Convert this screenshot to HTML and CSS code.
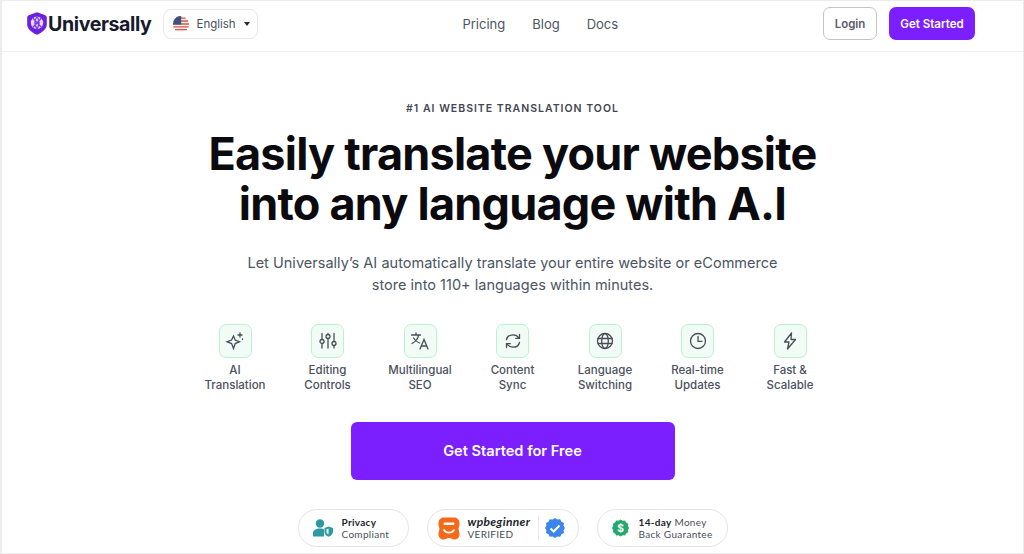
FILE: index.html
```html
<!DOCTYPE html>
<html lang="en">
<head>
    <meta charset="UTF-8">
    <meta name="viewport" content="width=device-width, initial-scale=1.0">
    <title>Universally - AI Website Translation</title>
    <link rel="stylesheet" href="styles.css">
</head>
<body>
    <div class="page">
        <header class="topbar">
            <div class="topbar-left">
                <a class="brand" href="#">
                    <svg class="brand-mark" width="20" height="23" viewBox="0 0 20 23">
                        <path d="M10 0.3 L17.8 3 C19 3.4 19.8 4.4 19.8 5.6 V12.5 C19.8 17 15 20.8 10 22.7 C5 20.8 0.2 17 0.2 12.5 V5.6 C0.2 4.4 1 3.4 2.2 3 Z" fill="#6a22dc"/>
                        <circle cx="10" cy="10.8" r="6.2" fill="#e6d6ff"/>
                        <path d="M5.8 6 L14.5 15.5 M14.5 6 L5.8 15.5 M10 4.5 C7.5 8 7.5 13 10 17 M10 4.5 C12.5 8 12.5 13 10 17" fill="none" stroke="#7a35e6" stroke-width="1.2"/>
                    </svg>
                    <span>Universally</span>
                </a>
                <button class="lang">
                    <svg class="flag" width="16" height="16" viewBox="0 0 16 16">
                        <circle cx="8" cy="8" r="8" fill="#f5efec"/>
                        <path d="M3.5 1.4 H12.5 V2.8 H3.5 Z M1 4.3 H15 V5.8 H1 Z M0 7.2 H16 V8.7 H0 Z M0.3 10.2 H15.7 V11.6 H0.3 Z M2 13 H14 V14.3 H2 Z" fill="#cf5b50"/>
                        <path d="M8 0 A8 8 0 0 0 0.5 5.3 L0 8.6 H8.2 V0 Z" fill="#3f4f80"/>
                    </svg>
                    <span>English</span>
                    <i class="caret"></i>
                </button>
            </div>
            <nav class="nav">
                <a href="#">Pricing</a>
                <a href="#">Blog</a>
                <a href="#">Docs</a>
            </nav>
            <div class="topbar-right">
                <a class="btn-login" href="#">Login</a>
                <a class="btn-start" href="#">Get Started</a>
            </div>
        </header>

        <main class="hero">
            <p class="eyebrow">#1 AI WEBSITE TRANSLATION TOOL</p>
            <h1>Easily translate your website<br>into any language with A.I</h1>
            <p class="lead">Let Universally’s AI automatically translate your entire website or eCommerce<br>store into 110+ languages within minutes.</p>

            <ul class="features">
                <li>
                    <span class="icon-box">
                        <svg width="20" height="20" viewBox="0 0 20 20" class="ico"><path d="M8.5 5 L10.2 9 L14.5 10.8 L10.2 12.6 L8.5 17.5 L6.6 12.6 L2 10.8 L6.6 9 Z"/><path d="M15 2 V6 M13 4 H17 M17.5 8 V8.6"/></svg>
                    </span>
                    AI<br>Translation
                </li>
                <li>
                    <span class="icon-box">
                        <svg width="20" height="20" viewBox="0 0 20 20" class="ico"><path d="M4 2.5 V8.5 M4 12.5 V17 M10 2.5 V3.5 M10 7.5 V17 M16 2.5 V10.5 M16 14.5 V17"/><circle cx="4" cy="10.5" r="2"/><circle cx="10" cy="5.5" r="2"/><circle cx="16" cy="12.5" r="2"/></svg>
                    </span>
                    Editing<br>Controls
                </li>
                <li>
                    <span class="icon-box">
                        <svg width="20" height="20" viewBox="0 0 20 20" class="ico"><path d="M1.5 4 H10.5 M6 2 V4 M8.5 4 C8 8 5 11 2 12.5 M3.5 7 C5 9.5 7 11 9.5 12"/><path d="M10 18 L14 8.5 L18 18 M11.3 15 H16.7"/></svg>
                    </span>
                    Multilingual<br>SEO
                </li>
                <li>
                    <span class="icon-box">
                        <svg width="20" height="20" viewBox="0 0 20 20" class="ico"><path d="M3.5 8.5 C4.2 5.5 7 3.8 10 3.8 C12.6 3.8 14.6 5 16 7 M16.5 3.5 V7.3 H12.7"/><path d="M16.5 11.5 C15.8 14.5 13 16.2 10 16.2 C7.4 16.2 5.4 15 4 13 M3.5 16.5 V12.7 H7.3"/></svg>
                    </span>
                    Content<br>Sync
                </li>
                <li>
                    <span class="icon-box">
                        <svg width="20" height="20" viewBox="0 0 20 20" class="ico"><circle cx="10" cy="10" r="7.5"/><ellipse cx="10" cy="10" rx="3.3" ry="7.5"/><path d="M3 7.5 H17 M3 12.5 H17"/></svg>
                    </span>
                    Language<br>Switching
                </li>
                <li>
                    <span class="icon-box">
                        <svg width="20" height="20" viewBox="0 0 20 20" class="ico"><circle cx="10" cy="10" r="7.5"/><path d="M10 5.5 V10.3 H14"/></svg>
                    </span>
                    Real-time<br>Updates
                </li>
                <li>
                    <span class="icon-box">
                        <svg width="20" height="20" viewBox="0 0 20 20" class="ico"><path d="M11.5 2 L4.5 11 H9 L7.5 18 L15.5 8.5 H11 Z" stroke-linejoin="round"/></svg>
                    </span>
                    Fast &amp;<br>Scalable
                </li>
            </ul>

            <a class="cta" href="#">Get Started for Free</a>

            <div class="badges">
                <div class="badge badge-privacy">
                    <svg width="20" height="18" viewBox="0 0 20 18">
                        <circle cx="7" cy="4.5" r="4.2" fill="#2b9aa3"/>
                        <path d="M0 17.5 V14 C0 11 3 9.5 7 9.5 C8.8 9.5 10.2 9.8 11 10.4 V17.5 Z" fill="#2b9aa3"/>
                        <path d="M15.5 7.5 L20 9 V12.5 C20 15 18 16.8 15.5 17.8 C13 16.8 11.5 15 11.5 12.5 V9 Z" fill="#2b9aa3"/>
                        <path d="M15.5 9.5 V15.5 C14.3 14.8 13.5 13.8 13.5 12.5 V10.2 Z" fill="#fff"/>
                    </svg>
                    <span class="badge-text"><b>Privacy</b><br>Compliant</span>
                </div>
                <div class="badge badge-wpb">
                    <svg width="22" height="23" viewBox="0 0 22 23">
                        <path d="M6 0.5 H16 C19.5 0.5 21.5 3 21.5 6.5 C21.5 9 20.8 10.5 20.5 12 C21 14 21.5 15.5 21.5 17.5 C21.5 20.5 19 22.5 16.5 22.5 C14.5 22.5 13 21 11 21 C9 21 7.5 22.5 5.5 22.5 C3 22.5 0.5 20.5 0.5 17.5 C0.5 15.5 1 14 1.5 12 C1.2 10.5 0.5 9 0.5 6.5 C0.5 3 2.5 0.5 6 0.5 Z" fill="#f4691a"/>
                        <rect x="5.5" y="5.5" width="11" height="2.4" rx="1.2" fill="#fff"/>
                        <path d="M6 13 C8 16.5 14 16.5 16 13" fill="none" stroke="#fff" stroke-width="1.7" stroke-linecap="round"/>
                    </svg>
                    <span class="badge-text"><b class="wp-name">wpbeginner</b><br>VERIFIED</span>
                    <span class="badge-sep"></span>
                    <svg class="seal" width="20" height="20" viewBox="0 0 20 20">
                        <path d="M10 0 L12.4 1.6 L15.2 1.2 L16.4 3.7 L19 4.9 L18.6 7.7 L20 10 L18.6 12.3 L19 15.1 L16.4 16.3 L15.2 18.8 L12.4 18.4 L10 20 L7.6 18.4 L4.8 18.8 L3.6 16.3 L1 15.1 L1.4 12.3 L0 10 L1.4 7.7 L1 4.9 L3.6 3.7 L4.8 1.2 L7.6 1.6 Z" fill="#3b86ee"/>
                        <path d="M5.5 10.5 L8.7 13.5 L14.5 7.5" fill="none" stroke="#fff" stroke-width="2"/>
                    </svg>
                </div>
                <div class="badge badge-money">
                    <svg width="20" height="20" viewBox="0 0 20 20">
                        <path d="M10 0 L12.4 1.6 L15.2 1.2 L16.4 3.7 L19 4.9 L18.6 7.7 L20 10 L18.6 12.3 L19 15.1 L16.4 16.3 L15.2 18.8 L12.4 18.4 L10 20 L7.6 18.4 L4.8 18.8 L3.6 16.3 L1 15.1 L1.4 12.3 L0 10 L1.4 7.7 L1 4.9 L3.6 3.7 L4.8 1.2 L7.6 1.6 Z" fill="#25a86b"/>
                        <text x="10" y="14.2" text-anchor="middle" class="dollar">$</text>
                    </svg>
                    <span class="badge-text"><b>14-day</b> Money<br>Back Guarantee</span>
                </div>
            </div>
        </main>
    </div>
</body>
</html>
```

FILE: styles.css
```css
* {
    box-sizing: border-box;
}
html, body {
    margin: 0;
    height: 100%;
}
body {
    background: #fff;
    color: #111;
    font-family: Inter, "Liberation Sans", sans-serif;
    overflow: hidden;
}
a {
    color: inherit;
    text-decoration: none;
}
.page {
    height: 554px;
    border: 1px solid #ececec;
    border-left-width: 2px;
    overflow: hidden;
}
.topbar {
    height: 51px;
    border-bottom: 1px solid #f1f1f2;
    display: flex;
    align-items: center;
    padding: 0 48px 5px 25px;
}
.topbar-left {
    display: flex;
    align-items: center;
    gap: 12px;
}
.brand {
    display: flex;
    align-items: center;
    gap: 1px;
    font-size: 19.6px;
    font-weight: 700;
    letter-spacing: -0.4px;
    color: #171a2c;
}
.lang {
    display: flex;
    align-items: center;
    height: 30px;
    width: 95px;
    padding: 0 9px;
    gap: 7px;
    background: #fff;
    border: 1px solid #e8e8ea;
    border-radius: 8px;
    font-family: inherit;
    font-size: 11.5px;
    color: #4b4f5c;
}
.flag {
    flex: none;
}
.caret {
    margin-left: 1px;
    border-left: 3.5px solid transparent;
    border-right: 3.5px solid transparent;
    border-top: 4px solid #2a2c35;
}
.nav {
    display: flex;
    gap: 27px;
    margin-left: 204px;
    font-size: 13px;
    color: #4b5563;
}
.topbar-right {
    display: flex;
    align-items: center;
    gap: 12px;
    margin-left: auto;
}
.btn-login, .btn-start {
    display: flex;
    align-items: center;
    justify-content: center;
    height: 33px;
    font-size: 11.5px;
    font-weight: 600;
    border-radius: 7px;
}
.btn-login {
    width: 54px;
    border: 1px solid #c4c4c8;
    color: #5a5e6b;
}
.btn-start {
    width: 86px;
    background: #7b1fff;
    color: #fff;
}
.hero {
    display: flex;
    flex-direction: column;
    align-items: center;
    padding-top: 50px;
}
.eyebrow {
    margin: 0;
    font-size: 10.5px;
    line-height: 13px;
    font-weight: 600;
    letter-spacing: 1px;
    color: #414654;
}
h1 {
    margin: 14px 0 0;
    font-size: 45px;
    line-height: 49.5px;
    font-weight: 700;
    letter-spacing: -0.77px;
    text-align: center;
    color: #0b0b0f;
}
.lead {
    margin: 24px 0 0;
    font-size: 14.5px;
    line-height: 22px;
    letter-spacing: 0.02px;
    text-align: center;
    color: #4b5563;
}
.features {
    list-style: none;
    display: flex;
    margin: 28px 0 0;
    padding: 0;
}
.features li {
    width: 92.5px;
    display: flex;
    flex-direction: column;
    align-items: center;
    text-align: center;
    font-size: 11.5px;
    line-height: 15px;
    font-weight: 500;
    color: #4b5060;
}
.icon-box {
    display: flex;
    align-items: center;
    justify-content: center;
    width: 33px;
    height: 34px;
    margin-bottom: 5px;
    background: #f2fcf6;
    border: 1px solid #bcf0d2;
    border-radius: 7px;
}
.ico {
    fill: none;
    stroke: #4a4d57;
    stroke-width: 1.3;
    stroke-linecap: round;
}
.cta {
    display: flex;
    align-items: center;
    justify-content: center;
    width: 324px;
    height: 58px;
    margin-top: 29px;
    background: #7b1fff;
    border-radius: 6px;
    color: #fff;
    font-size: 14.6px;
    font-weight: 600;
}
.badges {
    display: flex;
    gap: 18px;
    margin-top: 29px;
}
.badge {
    display: flex;
    align-items: center;
    gap: 10px;
    height: 38px;
    padding: 0 14px;
    border: 1px solid #e4e4e6;
    border-radius: 19px;
}
.badge-privacy {
    width: 111px;
    gap: 9px;
}
.badge-wpb {
    width: 152px;
    gap: 8px;
    padding: 0 12px 0 10px;
}
.badge-money {
    width: 131px;
    gap: 10px;
}
.badge-text {
    font-family: Lato, Inter, sans-serif;
    font-size: 10px;
    line-height: 12px;
    letter-spacing: 0.3px;
    white-space: nowrap;
    color: #4b4f58;
}
.badge-text b {
    color: #22252e;
}
.wp-name {
    font-style: italic;
    font-size: 12px;
}
.badge-sep {
    width: 1px;
    height: 24px;
    background: #eaeaea;
}
.seal {
    margin-left: -2px;
}
.dollar {
    font-family: Inter, sans-serif;
    font-size: 12px;
    font-weight: 700;
    fill: #fff;
}
```
